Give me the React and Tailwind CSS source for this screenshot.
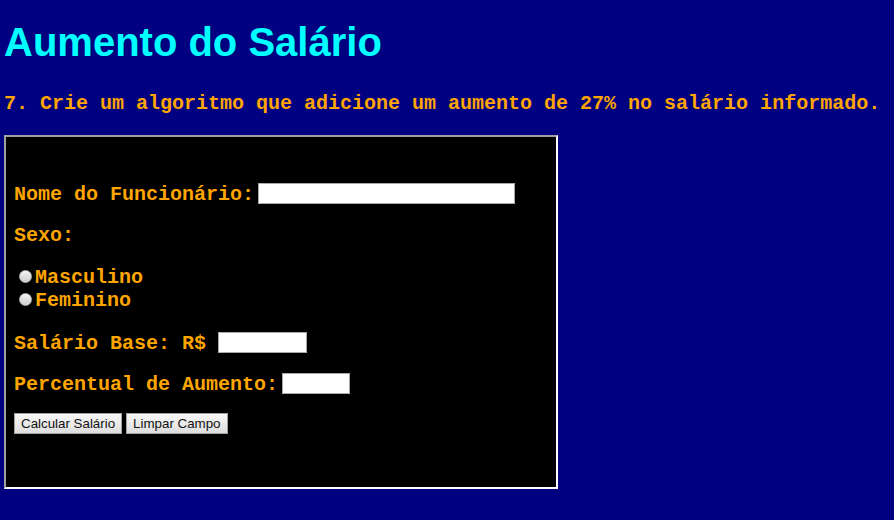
import React from 'react';

const mono = "font-['Liberation_Mono','Courier_New',monospace] font-bold text-[20px] text-[#FFA500] pt-[3px]";
const input = "h-[21px] bg-white border border-[#a9a9a9]";
const button = "h-[21px] px-[6px] border border-[#a0a0a0] bg-gradient-to-b from-[#f8f8f8] to-[#dddddd] text-[13.33px] text-[#111] font-['Liberation_Sans',Arial,sans-serif] leading-none";

const Radio = ({ label, className }) => (
  <label className={`flex items-center h-[22px] ${className}`}>
    <span className="ml-[5px] w-[13px] h-[13px] rounded-full border border-[#b5b5b5] bg-gradient-to-b from-[#f4f4f4] to-[#cfcfcf]" />
    <span className={`ml-[3px] ${mono}`}>{label}</span>
  </label>
);

export default function App() {
  return (
    <div className="w-[894px] h-[520px] bg-[#000080] px-1 pt-[19px] overflow-hidden">
      <h1 className="font-['Liberation_Sans',Arial,sans-serif] font-bold text-[40px] leading-[46px] text-[#00FFFF]">
        Aumento do Salário
      </h1>
      <p className="font-['Liberation_Mono','Courier_New',monospace] font-bold text-[20px] text-[#FFA500] leading-[23px] mt-[27px] whitespace-nowrap">
        7. Crie um algoritmo que adicione um aumento de 27% no salário informado.
      </p>

      <div className="mt-[20px] w-[554px] h-[354px] bg-black border-2 border-t-[#a0a0a0] border-l-[#a0a0a0] border-b-white border-r-white pl-[8px] flex flex-col">
        <div className="flex items-center h-[22px] mt-[45px]">
          <span className={mono}>Nome do Funcionário:</span>
          <div className={`ml-[4px] w-[257px] ${input}`} />
        </div>

        <div className="flex items-center h-[22px] mt-[19px]">
          <span className={mono}>Sexo:</span>
        </div>

        <Radio label="Masculino" className="mt-[20px]" />
        <Radio label="Feminino" className="mt-px" />

        <div className="flex items-center h-[22px] mt-[21px]">
          <span className={mono}>Salário Base: R$</span>
          <div className={`ml-[12px] w-[89px] ${input}`} />
        </div>

        <div className="flex items-center h-[22px] mt-[19px]">
          <span className={mono}>Percentual de Aumento:</span>
          <div className={`ml-[4px] w-[68px] ${input}`} />
        </div>

        <div className="flex items-center gap-[4px] mt-[19px]">
          <button className={button}>Calcular Salário</button>
          <button className={button}>Limpar Campo</button>
        </div>
      </div>
    </div>
  );
}
